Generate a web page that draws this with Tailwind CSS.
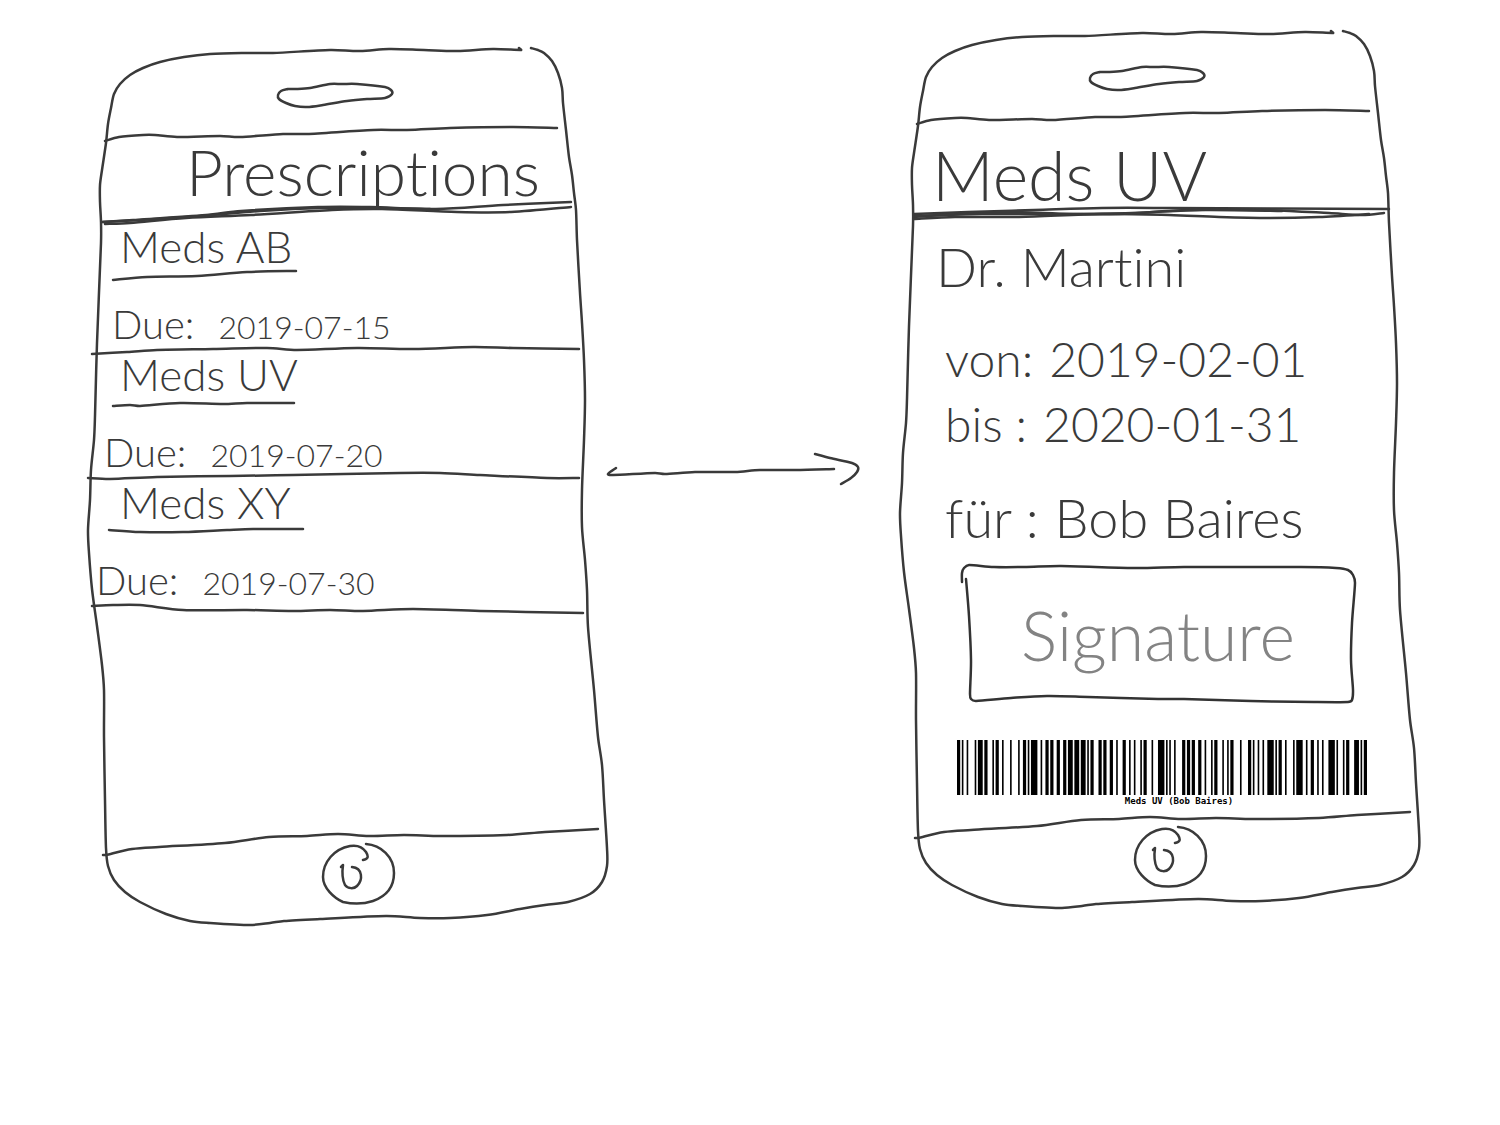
<!DOCTYPE html>
<html lang="en">
<head>
<meta charset="utf-8">
<title>Prescriptions wireframe</title>
<script src="https://cdn.jsdelivr.net/npm/@tailwindcss/browser@4"></script>
</head>
<body class="bg-white font-['Lato','Open_Sans',sans-serif] font-light text-[#3a3a3a] [font-variant-ligatures:none]">

<!-- Shared pen strokes of the phone body and home button -->
<svg class="absolute size-0" aria-hidden="true">
  <defs>
    <g id="phone-frame" fill="none" stroke="#3a3a3a" stroke-width="2.5" stroke-linecap="round" stroke-linejoin="round">
      <path data-points="519,48 521,50 493,49 457,51 424,50 389,49 360,51 330,50 273,53 244,53 210,54 184,57 160,62 143,68 130,75 120,84 114,94 111,108 108,124 106,143 102,170 100,185 100,202 101,222 101,243 97,343 95,416 94,440 91,470 90,500 88,530 89,553 92,589 97,626 102,665 104,690 104,737 105,800 106,848 108,866 114,880 125,892 140,902 166,914 190,921 210,923 250,925 270,923 284,921 320,919 386,916 420,918 450,918 487,915 520,909 545,905 568,902 590,894 602,882 607,866 607,848 604,800 602,765 598,737 594,690 588,627 587,590 585,560 582,527 582,490 584,440 585,400 584,360 582,323 580,293 577,240 576,210 574,193 572,175 569,157 566,130 563,103 562,88 558,73 552,61 544,53 538,50 531,48"/>
      <path data-points="105,141 119,137 143,135 155,135 177,137 220,136 240,137 283,134 307,134 373,130 407,130 450,128 513,127 557,128"/>
      <path data-points="288,89 296,89 310,88 330,84 342,84 357,84 385,87 391,90 392,94 385,98 367,99 347,101 323,105 307,107 295,106 286,103 279,99 278,95 281,91 288,89"/>
      <path data-points="103,855 106,855 132,849 159,847 225,843 269,837 307,836 338,834 369,836 404,835 441,836 507,835 545,832 598,829"/>
    </g>
    <g id="home-strokes" fill="none" stroke="#3a3a3a" stroke-width="2.5" stroke-linecap="round" stroke-linejoin="round">
      <path d="M363 860C368 859 369 857 366 852C362 846 356 845 350 846C334 849 323 862 323 877C323 888 334 898 343 902C352 904 364 904 373 901C387 896 394 887 394 873C394 857 381 845 366 844"/>
      <path d="M341 867L343 865C342 872 342 879 345 885C348 889 354 889 357 886C363 880 363 868 352 867"/>
    </g>
  </defs>
</svg>

<main class="flex min-h-screen items-start pt-[27px] pr-[82px] pl-[88px]">

  <section class="relative mt-[17px] flex min-h-[884px] w-[520px] shrink-0 flex-col" aria-label="Prescription list">
    <svg class="pointer-events-none absolute inset-0 size-full overflow-visible" viewBox="88 44 520 884" aria-hidden="true"><use href="#phone-frame"/></svg>

    <header class="flex h-40 items-end pl-[98px]">
      <h1 class="text-[64px] leading-[64px]">Prescriptions</h1>
    </header>
    <svg class="h-5 w-full overflow-visible" viewBox="88 204 520 20" fill="none" stroke="#3a3a3a" stroke-width="2.5" stroke-linecap="round" aria-hidden="true">
      <path data-points="102,222 133,220 206,215 241,211 318,207 370,207 436,209 503,205 571,202"/>
      <path data-points="105,224 130,223 186,218 251,215 332,210 382,209 457,212 511,212 571,207"/>
      <path data-points="103,222 140,220 200,216 260,211 320,208 380,208 430,209"/>
    </svg>

    <ul class="flex-1">
      <li>
        <a href="#" class="block pl-8 text-[44px] leading-[44px]">Meds AB</a>
        <svg class="h-4 w-full overflow-visible" viewBox="88 268 520 16" fill="none" stroke="#3a3a3a" stroke-width="2.5" stroke-linecap="round" aria-hidden="true"><path data-points="113,280 147,277 197,276 247,272 296,271"/></svg>
        <p class="flex h-15 items-baseline gap-6 pt-5 pl-6 leading-[40px]"><span class="text-[40px]">Due:</span><time class="text-[32px]" datetime="2019-07-15">2019-07-15</time></p>
        <svg class="h-2 w-full overflow-visible" viewBox="88 344 520 8" fill="none" stroke="#3a3a3a" stroke-width="2.5" stroke-linecap="round" aria-hidden="true"><path data-points="92,354 127,352 157,350 213,349 267,348 297,350 357,348 413,349 473,347 513,348 579,349"/></svg>
      </li>
      <li>
        <a href="#" class="block pl-8 text-[44px] leading-[44px]">Meds UV</a>
        <svg class="h-4 w-full overflow-visible" viewBox="88 396 520 16" fill="none" stroke="#3a3a3a" stroke-width="2.5" stroke-linecap="round" aria-hidden="true"><path data-points="113,406 130,405 140,406 180,403 223,404 247,403 294,403"/></svg>
        <p class="flex h-15 items-baseline gap-6 pt-5 pl-4 leading-[40px]"><span class="text-[40px]">Due:</span><time class="text-[32px]" datetime="2019-07-20">2019-07-20</time></p>
        <svg class="h-2 w-full overflow-visible" viewBox="88 472 520 8" fill="none" stroke="#3a3a3a" stroke-width="2.5" stroke-linecap="round" aria-hidden="true"><path data-points="88,478 110,479 157,477 230,476 293,475 400,473 440,473 480,475 547,478 579,478"/></svg>
      </li>
      <li>
        <a href="#" class="block pl-8 text-[44px] leading-[44px]">Meds XY</a>
        <svg class="h-4 w-full overflow-visible" viewBox="88 524 520 16" fill="none" stroke="#3a3a3a" stroke-width="2.5" stroke-linecap="round" aria-hidden="true"><path data-points="109,530 140,532 183,532 227,530 253,529 303,529"/></svg>
        <p class="flex h-15 items-baseline gap-6 pt-5 pl-2 leading-[40px]"><span class="text-[40px]">Due:</span><time class="text-[32px]" datetime="2019-07-30">2019-07-30</time></p>
        <svg class="h-2 w-full overflow-visible" viewBox="88 600 520 8" fill="none" stroke="#3a3a3a" stroke-width="2.5" stroke-linecap="round" aria-hidden="true"><path data-points="92,606 113,605 140,605 183,610 247,610 293,611 330,610 363,611 413,609 480,611 583,613"/></svg>
      </li>
    </ul>

    <footer class="flex justify-center pb-[22px] pl-5">
      <button type="button" class="block h-[64px] w-[76px]" aria-label="Home"><svg class="size-full" viewBox="320 842 76 64" aria-hidden="true"><use href="#home-strokes"/></svg></button>
    </footer>
  </section>

  <div class="flex flex-1 justify-center pt-[422px] pr-10">
    <svg class="h-10 w-[252px] overflow-visible" viewBox="608 449 252 40" fill="none" stroke="#3a3a3a" stroke-width="2.5" stroke-linecap="round" role="img" aria-label="Linked screens">
      <path data-points="616,468 608,474 613,475 655,473 665,474 695,472 735,472 760,470 795,470 834,469"/>
      <path data-points="815,454 830,458 852,463 858,467 857,472 851,478 841,484"/>
    </svg>
  </div>

  <section class="relative flex min-h-[884px] w-[520px] shrink-0 flex-col" aria-label="Prescription details">
    <svg class="pointer-events-none absolute inset-0 size-full overflow-visible" viewBox="88 44 520 884" aria-hidden="true"><use href="#phone-frame"/></svg>

    <header class="flex h-45 items-end pl-8">
      <h2 class="text-[68px] leading-[64px]">Meds UV</h2>
    </header>
    <svg class="h-4 w-full overflow-visible" viewBox="898 207 520 16" fill="none" stroke="#3a3a3a" stroke-width="2.5" stroke-linecap="round" aria-hidden="true">
      <path data-points="912,214 966,212 1032,210 1100,208 1167,208 1387,209"/>
      <path data-points="912,217 1000,212 1067,214 1117,214 1187,210 1263,210 1327,213 1360,215 1382,213"/>
      <path data-points="912,219 953,217 1017,217 1100,214 1167,215 1217,217 1267,218 1317,217 1367,214"/>
      <path data-points="912,216 980,214 1060,214 1130,213 1200,210 1280,211"/>
    </svg>

    <p class="pt-5 pl-9 text-[54px] leading-[48px]">Dr. Martini</p>
    <dl class="pt-11 pl-[45px]">
      <div class="flex gap-4 text-[48px] leading-[48px]"><dt>von:</dt><dd>2019-02-01</dd></div>
      <div class="flex gap-4 pt-[17px] text-[48px] leading-[48px]"><dt>bis :</dt><dd>2020-01-31</dd></div>
      <div class="flex gap-4 pt-11 text-[54px] leading-[52px]"><dt>für :</dt><dd>Bob Baires</dd></div>
    </dl>

    <button type="button" class="mt-[21px] ml-[60px] grid h-[140px] w-[396px] place-items-center text-[68px] text-[#838383]">
      <svg class="col-start-1 row-start-1 size-full overflow-visible" viewBox="959 565 396 140" fill="none" stroke="#333" stroke-width="2.5" stroke-linecap="round" aria-hidden="true"><path data-points="961,582 961,573 963,568 968,565 993,567 1023,567 1060,566 1133,568 1183,567 1300,567 1335,568 1347,570 1352,575 1354,583 1351,623 1350,660 1352,690 1351,700 1347,702 1313,702 1250,701 1183,699 1157,699 1087,697 1046,696 1010,698 975,701 970,699 969,694 970,660 968,616 965,579"/></svg>
      <span class="col-start-1 row-start-1 leading-none">Signature</span>
    </button>

    <figure class="mt-[35px] pl-[57px]">
      <svg id="barcode" class="block h-[55px] w-[410px]" viewBox="0 0 255 55" preserveAspectRatio="none" role="img" aria-label="Meds UV (Bob Baires)"></svg>
      <figcaption class="w-[444px] pt-px text-center font-['DejaVu_Sans_Mono',monospace] text-[9px] leading-[11px] font-bold text-black">Meds UV (Bob Baires)</figcaption>
    </figure>

    <footer class="mt-auto flex justify-center pb-[22px] pl-5">
      <button type="button" class="block h-[64px] w-[76px]" aria-label="Home"><svg class="size-full" viewBox="320 842 76 64" aria-hidden="true"><use href="#home-strokes"/></svg></button>
    </footer>
  </section>
</main>

<script>
  // Draw every pen stroke as a smooth curve through its points
  document.querySelectorAll('[data-points]').forEach(el => {
    const p = el.dataset.points.split(' ').map(s => s.split(',').map(Number));
    let d = `M${p[0]}`;
    for (let i = 0; i < p.length - 1; i++) {
      const a = p[i - 1] || p[i], b = p[i], c = p[i + 1], e = p[i + 2] || c;
      // limit each handle to a third of its own segment
      const len = Math.hypot(c[0] - b[0], c[1] - b[1]);
      const k1 = Math.min(1 / 6, len / 3 / (Math.hypot(c[0] - a[0], c[1] - a[1]) || 1));
      const k2 = Math.min(1 / 6, len / 3 / (Math.hypot(e[0] - b[0], e[1] - b[1]) || 1));
      d += `C${b[0] + (c[0] - a[0]) * k1},${b[1] + (c[1] - a[1]) * k1} ${c[0] - (e[0] - b[0]) * k2},${c[1] - (e[1] - b[1]) * k2} ${c}`;
    }
    el.setAttribute('d', d);
  });

  // Code 128 B: bar and gap widths for "Meds UV (Bob Baires)"
  const code = ['211214', '113123', '112214', '141221', '114212', '212222', '213131', '311123', '212222', '132212', '131123', '134111', '121421', '212222', '131123', '121124', '142112', '121241', '112214', '114212', '221213', '411311', '2331112'].join('');
  let x = 0, bars = '';
  [...code].forEach((w, i) => {
    if (i % 2 === 0) bars += `M${x} 0h${w}v55h-${w}z`;
    x += Number(w);
  });
  document.getElementById('barcode').innerHTML = `<path d="${bars}" fill="#000"/>`;
</script>
</body>
</html>
